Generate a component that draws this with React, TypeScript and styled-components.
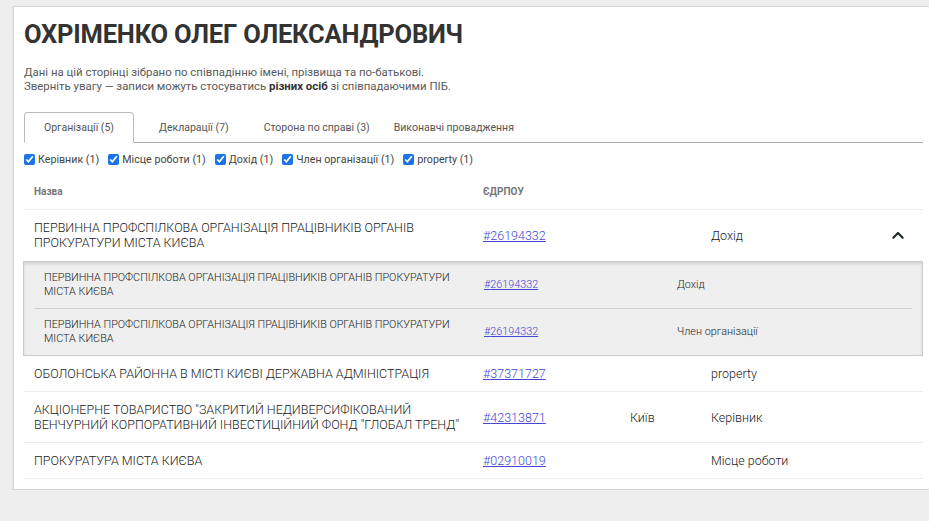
import React from 'react';
import styled, { createGlobalStyle } from 'styled-components';

const GlobalStyle = createGlobalStyle`
    html, body {
        margin: 0;
        padding: 0;
        background: #eeeeee;
        overflow: hidden;
        font-family: Roboto, 'Noto Sans', sans-serif;
        color: #333;
    }
`;

const Card = styled.div`
    margin: 6px 0 0 13px;
    width: 899px;
    padding: 0 30px 10px 10px;
    background: #fff;
    border: 1px solid #d4d4d4;
    box-shadow: 0 1px 2px rgba(0,0,0,0.08);
`;

const Title = styled.h1`
    margin: 12px 0 0 0;
    font-size: 25.5px;
    line-height: 30px;
    font-weight: 700;
    color: #333;
    letter-spacing: -0.2px;
`;

const Notice = styled.p`
    margin: 16px 0 0 0;
    font-size: 11.4px;
    line-height: 14px;
    color: #5a5a5a;
    font-weight: 400;
    b {
        font-weight: 700;
        color: #333;
    }
`;

const Tabs = styled.div`
    display: flex;
    margin-top: 18px;
    border-bottom: 1px solid #aaa;
    height: 31px;
    align-items: flex-end;
`;

const Tab = styled.div<{ $active?: boolean }>`
    height: ${p => (p.$active ? '31px' : '30px')};
    display: flex;
    align-items: center;
    padding: 0 ${p => (p.$active ? '19px' : '11px')};
    margin: ${p => (p.$active ? '0 13px -1px 0' : '0 11px 0 0')};
    font-size: 10.5px;
    color: #555;
    background: #fff;
    border: ${p => (p.$active ? '1px solid #bbb' : '1px solid transparent')};
    border-bottom: ${p => (p.$active ? '1px solid #fff' : 'none')};
    border-radius: 4px 4px 0 0;
    box-sizing: border-box;
    &:nth-child(3) {
        margin-right: 0;
    }
`;

const Filters = styled.div`
    display: flex;
    gap: 9px;
    margin-top: 8px;
    height: 16px;
    align-items: center;
`;

const Filter = styled.label`
    display: flex;
    align-items: center;
    gap: 3px;
    font-size: 10.7px;
    color: #444;
    input {
        margin: 0;
        width: 11px;
        height: 11px;
        accent-color: #1a73e8;
    }
`;

const Grid = styled.div`
    display: grid;
    grid-template-columns: 449px 147px 81px 1fr 50px;
    align-items: center;
    border-bottom: 1px solid #ececec;
`;

const HeadRow = styled(Grid)`
    margin-top: 7px;
    height: 36px;
    box-sizing: border-box;
`;

const HeadCell = styled.div`
    padding: 0 10px;
    font-size: 10px;
    font-weight: 700;
    color: #777;
`;

const Row = styled(Grid)<{ $open?: boolean }>`
    padding: 10px 0;
    border-bottom: ${p => (p.$open ? 'none' : '1px solid #ececec')};
`;

const Cell = styled.div`
    padding: 0 10px;
    font-size: 12.5px;
    line-height: 15px;
    font-weight: 300;
    color: #222;
`;

const Link = styled.a`
    color: #4646d4;
    text-decoration: underline;
    font-size: 12.5px;
    font-weight: 300;
`;

const Toggle = styled.div`
    display: flex;
    justify-content: center;
    align-items: center;
`;

const Expanded = styled.div`
    background: #efefef;
    border: 1px solid #cbcbcb;
    box-shadow: inset 0 2px 3px rgba(0,0,0,0.12);
    margin: 1px 0 0 -1px;
    padding: 0 10px;
`;

const SubRow = styled.div<{ $last?: boolean }>`
    display: grid;
    grid-template-columns: 440px 193px 1fr;
    align-items: center;
    padding: 9px 0;
    border-bottom: ${p => (p.$last ? 'none' : '1px solid #d0d0d0')};
`;

const SubCell = styled.div`
    padding: 0 10px;
    font-size: 10.8px;
    line-height: 14px;
    font-weight: 300;
    color: #222;
`;

const SubLink = styled(Link)`
    font-size: 10.8px;
`;

const Chevron = () => (
    <svg width="16" height="16" viewBox="0 0 24 24" fill="none" stroke="#1f2a25" strokeWidth="3.2" strokeLinecap="round" strokeLinejoin="round">
        <path d="M5 16l7-7 7 7" />
    </svg>
);

const filters = ['Керівник (1)', 'Місце роботи (1)', 'Дохід (1)', 'Член організації (1)', 'property (1)'];

const subRows = [
    { name: 'ПЕРВИННА ПРОФСПІЛКОВА ОРГАНІЗАЦІЯ ПРАЦІВНИКІВ ОРГАНІВ ПРОКУРАТУРИ МІСТА КИЄВА', code: '26194332', role: 'Дохід' },
    { name: 'ПЕРВИННА ПРОФСПІЛКОВА ОРГАНІЗАЦІЯ ПРАЦІВНИКІВ ОРГАНІВ ПРОКУРАТУРИ МІСТА КИЄВА', code: '26194332', role: 'Член організації' },
];

const rows = [
    { name: 'ОБОЛОНСЬКА РАЙОННА В МІСТІ КИЄВІ ДЕРЖАВНА АДМІНІСТРАЦІЯ', code: '37371727', city: '', role: 'property' },
    { name: 'АКЦІОНЕРНЕ ТОВАРИСТВО "ЗАКРИТИЙ НЕДИВЕРСИФІКОВАНИЙ ВЕНЧУРНИЙ КОРПОРАТИВНИЙ ІНВЕСТИЦІЙНИЙ ФОНД "ГЛОБАЛ ТРЕНД"', code: '42313871', city: 'Київ', role: 'Керівник' },
    { name: 'ПРОКУРАТУРА МІСТА КИЄВА', code: '02910019', city: '', role: 'Місце роботи' },
];

export default function App() {
    return (
        <>
            <GlobalStyle />
            <Card>
                <Title>ОХРІМЕНКО ОЛЕГ ОЛЕКСАНДРОВИЧ</Title>
                <Notice>
                    Дані на цій сторінці зібрано по співпадінню імені, прізвища та по-батькові.<br />
                    Зверніть увагу — записи можуть стосуватись <b>різних осіб</b> зі співпадаючими ПІБ.
                </Notice>
                <Tabs>
                    <Tab $active>Організації (5)</Tab>
                    <Tab>Декларації (7)</Tab>
                    <Tab>Сторона по справі (3)</Tab>
                    <Tab>Виконавчі провадження</Tab>
                </Tabs>
                <Filters>
                    {filters.map(f => (
                        <Filter key={f}>
                            <input type="checkbox" checked readOnly />
                            {f}
                        </Filter>
                    ))}
                </Filters>
                <HeadRow>
                    <HeadCell>Назва</HeadCell>
                    <HeadCell>ЄДРПОУ</HeadCell>
                </HeadRow>
                <Row $open>
                    <Cell>ПЕРВИННА ПРОФСПІЛКОВА ОРГАНІЗАЦІЯ ПРАЦІВНИКІВ ОРГАНІВ ПРОКУРАТУРИ МІСТА КИЄВА</Cell>
                    <Cell><Link href="#">#26194332</Link></Cell>
                    <Cell />
                    <Cell>Дохід</Cell>
                    <Toggle><Chevron /></Toggle>
                </Row>
                <Expanded>
                    {subRows.map((r, i) => (
                        <SubRow key={i} $last={i === subRows.length - 1}>
                            <SubCell>{r.name}</SubCell>
                            <SubCell><SubLink href="#">#{r.code}</SubLink></SubCell>
                            <SubCell>{r.role}</SubCell>
                        </SubRow>
                    ))}
                </Expanded>
                {rows.map(r => (
                    <Row key={r.code}>
                        <Cell>{r.name}</Cell>
                        <Cell><Link href="#">#{r.code}</Link></Cell>
                        <Cell>{r.city}</Cell>
                        <Cell>{r.role}</Cell>
                        <div />
                    </Row>
                ))}
            </Card>
        </>
    );
}
